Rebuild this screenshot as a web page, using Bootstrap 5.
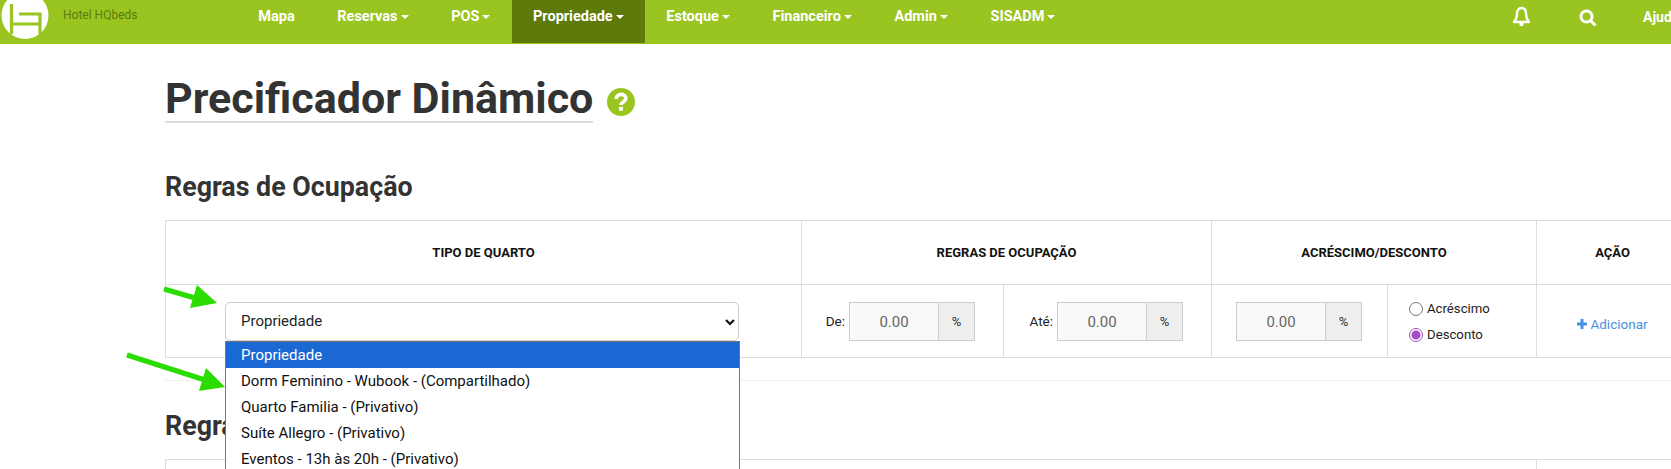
<!DOCTYPE html>
<html lang="pt-BR">
<head>
<meta charset="utf-8">
<title>Precificador Dinâmico</title>
<link href="https://cdn.jsdelivr.net/npm/bootstrap@5.3.0/dist/css/bootstrap.min.css" rel="stylesheet">
<style>
html,body{height:469px;overflow:hidden;background:#fff}
body{font-family:Roboto,"Liberation Sans",sans-serif;color:#333;position:relative}
.topbar{background:#9ac521;height:44px;padding:0;flex-wrap:nowrap;overflow:hidden;align-items:flex-start;justify-content:flex-start}
.brandbox{width:237px;flex:none;height:44px;position:relative}
.brandname{position:absolute;left:63px;top:7px;font-size:12px;color:#5e7a0b;line-height:16px}
.logosvg{position:absolute;left:0;top:-9px}
.topbar .nav-link{color:#fff;font-weight:700;font-size:14.5px;line-height:34px;height:43px;padding:0 21.300px;white-space:nowrap}
.topbar .nav-link.active{background:#5e7a0b;color:#fff}
.topbar .dropdown-toggle::after{vertical-align:2px;margin-left:3px;border-top-width:4px;border-left-width:4px;border-right-width:4px}
.righticons{position:absolute;left:1512px;top:0;display:flex;align-items:flex-start;white-space:nowrap;color:#fff;font-weight:700;font-size:14px;line-height:34px}
.bellicon{margin:6px 48px 0 0}
.findicon{margin:9px 46px 0 0}
.pagewrap{width:1523px;margin-left:165px}
.pagetitle{font-size:43px;font-weight:700;color:#333;margin:31px 0 0;line-height:46px;display:flex;align-items:center;gap:14px}
.pagetitle span{border-bottom:2px solid #ddd;padding-bottom:0}
.helpicon{margin-top:6px}
.sect{font-size:26.800px;font-weight:700;color:#333;margin:0;line-height:30px}
.first{margin-top:49px;margin-bottom:18px}
.rules{table-layout:fixed;width:1523px;margin:0;border-color:#ddd;font-size:12px;color:#222}
.rules th{height:64px;text-align:center;vertical-align:middle;font-size:13px;font-weight:700;color:#111}
.rules td{height:73px;padding:17px 28px 0 16px;vertical-align:top}
.c1{width:636px}.c2{width:202px}.c3{width:208px}.c4{width:176px}.c5{width:149px}.c6{width:152px}
.c15{width:1371px}
.rules td.tipocell{padding:17px 0 0 59px}
.tiposel{width:514px;height:39px;font-size:15px;padding:0 0 0 15px;color:#212529;border-color:#ccc;border-radius:5px;background-size:12px 10px;background-position:right 2px center;background-image:url("data:image/svg+xml,%3csvg xmlns='http://www.w3.org/2000/svg' viewBox='0 0 12 10'%3e%3cpath fill='none' stroke='%23111' stroke-width='2.200' d='M2 3l4 4 4-4'/%3e%3c/svg%3e")}
.lbl{font-size:13.500px;color:#222}
.pct{display:flex;width:126px}
.pct .form-control{background:#f9f9f9;border:1px solid #ccc;border-radius:0;height:39px;font-size:15px;text-align:center;color:#666;padding:0;width:90px;flex:none}
.pct .input-group-text{background:#eee;border:1px solid #ccc;border-left:0;border-radius:0;font-size:13px;padding:0;width:36px;justify-content:center;color:#333}
.rules td.moneycell{padding-left:24px;padding-right:0}
.rules td.radiocell{padding:13px 0 0 21px;font-size:13.200px}
.radiocell .form-check{min-height:0;margin:0 0 4px;padding-left:18px;line-height:22px}
.radiocell .form-check-input{width:14px;height:14px;margin:4px 0 0 -18px;border-color:#777;background-color:#fff}
.radiocell .form-check-input:checked{background-color:#fff;border-color:#a24fc4;background-image:radial-gradient(circle,#a24fc4 0 4px,#fff 5px)}
.rules td.addcell{padding:0}
.addlink{color:#4a90e2;text-decoration:none;font-size:13.500px;display:flex;align-items:center;justify-content:center;gap:3px;padding-top:29px}
.sep{border:0;border-top:1px solid #eee;opacity:1;margin:22px 0 0}
.second{margin-top:30px;margin-bottom:18px}
.optlist{position:absolute;left:225px;top:341px;width:515px;background:#fff;border:1px solid #767676;border-bottom:0;font-size:15px;color:#111;z-index:5}
.optitem{height:26px;line-height:26px;padding:0 15px}
.optitem.sel{background:#1a68d4;color:#fff}
.arrows{position:absolute;left:0;top:0;z-index:6;pointer-events:none}
</style>
</head>
<body>
<nav class="navbar topbar">
  <div class="brandbox">
    <svg class="logosvg" width="50" height="50" viewBox="0 0 50 50"><circle cx="25" cy="24.500" r="23.500" fill="#fff"/><path d="M11.500 13v30M11.500 33H40M19 23h21v20" fill="none" stroke="#9ac521" stroke-width="3.200"/></svg>
    <span class="brandname">Hotel HQbeds</span>
  </div>
  <ul class="nav flex-nowrap">
    <li class="nav-item"><a class="nav-link" href="#">Mapa</a></li>
    <li class="nav-item"><a class="nav-link dropdown-toggle" href="#">Reservas</a></li>
    <li class="nav-item"><a class="nav-link dropdown-toggle" href="#">POS</a></li>
    <li class="nav-item"><a class="nav-link dropdown-toggle active" href="#">Propriedade</a></li>
    <li class="nav-item"><a class="nav-link dropdown-toggle" href="#">Estoque</a></li>
    <li class="nav-item"><a class="nav-link dropdown-toggle" href="#">Financeiro</a></li>
    <li class="nav-item"><a class="nav-link dropdown-toggle" href="#">Admin</a></li>
    <li class="nav-item"><a class="nav-link dropdown-toggle" href="#">SISADM</a></li>
  </ul>
  <div class="righticons">
    <svg class="bellicon" width="19" height="21" viewBox="0 0 19 21"><path d="M9.500 2C6.500 2 5 4.500 5 7.500c0 4-1 6-3 8.500h15c-2-2.500-3-4.500-3-8.500C14 4.500 12.500 2 9.500 2z" fill="none" stroke="#fff" stroke-width="2.400" stroke-linejoin="round"/><circle cx="9.500" cy="18" r="2.200" fill="#fff"/></svg>
    <svg class="findicon" width="18" height="17" viewBox="0 0 18 17"><circle cx="7.500" cy="7.500" r="5.500" fill="none" stroke="#fff" stroke-width="3"/><path d="M11.500 11.500l5 5" stroke="#fff" stroke-width="3"/></svg>
    <span>Ajuda</span>
  </div>
</nav>
<main class="pagewrap">
  <h1 class="pagetitle"><span>Precificador Dinâmico</span>
    <svg class="helpicon" width="28" height="28" viewBox="0 0 29 29"><circle cx="14.500" cy="14.500" r="14.500" fill="#9ac521"/><path d="M9.500 11.500c0-6.500 10-6.500 10-.5 0 3.500-5 3.500-5 6.500" fill="none" stroke="#fff" stroke-width="3.800"/><rect x="12.500" y="19.500" width="4" height="4" fill="#fff"/></svg>
  </h1>
  <h3 class="sect first">Regras de Ocupação</h3>
  <table class="table table-bordered rules">
    <colgroup><col class="c1"><col class="c2"><col class="c3"><col class="c4"><col class="c5"><col class="c6"></colgroup>
    <thead><tr><th>TIPO DE QUARTO</th><th colspan="2">REGRAS DE OCUPAÇÃO</th><th colspan="2">ACRÉSCIMO/DESCONTO</th><th>AÇÃO</th></tr></thead>
    <tbody><tr>
      <td class="tipocell"><select class="form-select tiposel"><option>Propriedade</option></select></td>
      <td><div class="d-flex align-items-center gap-1 justify-content-end"><span class="lbl">De:</span><div class="pct"><input class="form-control" value="0.00"><span class="input-group-text">%</span></div></div></td>
      <td><div class="d-flex align-items-center gap-1 justify-content-end"><span class="lbl">Até:</span><div class="pct"><input class="form-control" value="0.00"><span class="input-group-text">%</span></div></div></td>
      <td class="moneycell"><div class="pct"><input class="form-control" value="0.00"><span class="input-group-text">%</span></div></td>
      <td class="radiocell">
        <div class="form-check"><input class="form-check-input" type="radio" name="tipo"><label class="form-check-label">Acréscimo</label></div>
        <div class="form-check"><input class="form-check-input" type="radio" name="tipo" checked><label class="form-check-label">Desconto</label></div>
      </td>
      <td class="addcell"><a class="addlink" href="#"><svg width="10" height="10" viewBox="0 0 10 10"><path d="M5 0v10M0 5h10" stroke="#4a90e2" stroke-width="3"/></svg>Adicionar</a></td>
    </tr></tbody>
  </table>
  <hr class="sep">
  <h3 class="sect second">Regras</h3>
  <table class="table table-bordered rules"><colgroup><col class="c15"><col class="c6"></colgroup><thead><tr><th></th><th></th></tr></thead></table>
</main>
<div class="optlist">
  <div class="optitem sel">Propriedade</div>
  <div class="optitem">Dorm Feminino - Wubook - (Compartilhado)</div>
  <div class="optitem">Quarto Familia - (Privativo)</div>
  <div class="optitem">Suíte Allegro - (Privativo)</div>
  <div class="optitem">Eventos - 13h às 20h - (Privativo)</div>
</div>
<svg class="arrows" width="300" height="469" viewBox="0 0 300 469">
  <path d="M164 289L195 298" stroke="#2bdc00" stroke-width="5" fill="none"/>
  <path d="M197 285L217 303 190 308z" fill="#2bdc00"/>
  <path d="M127 355L205 380" stroke="#2bdc00" stroke-width="5" fill="none"/>
  <path d="M206 368L225 387 199 391z" fill="#2bdc00"/>
</svg>
<script src="https://cdn.jsdelivr.net/npm/bootstrap@5.3.0/dist/js/bootstrap.bundle.min.js"></script>
</body>
</html>
